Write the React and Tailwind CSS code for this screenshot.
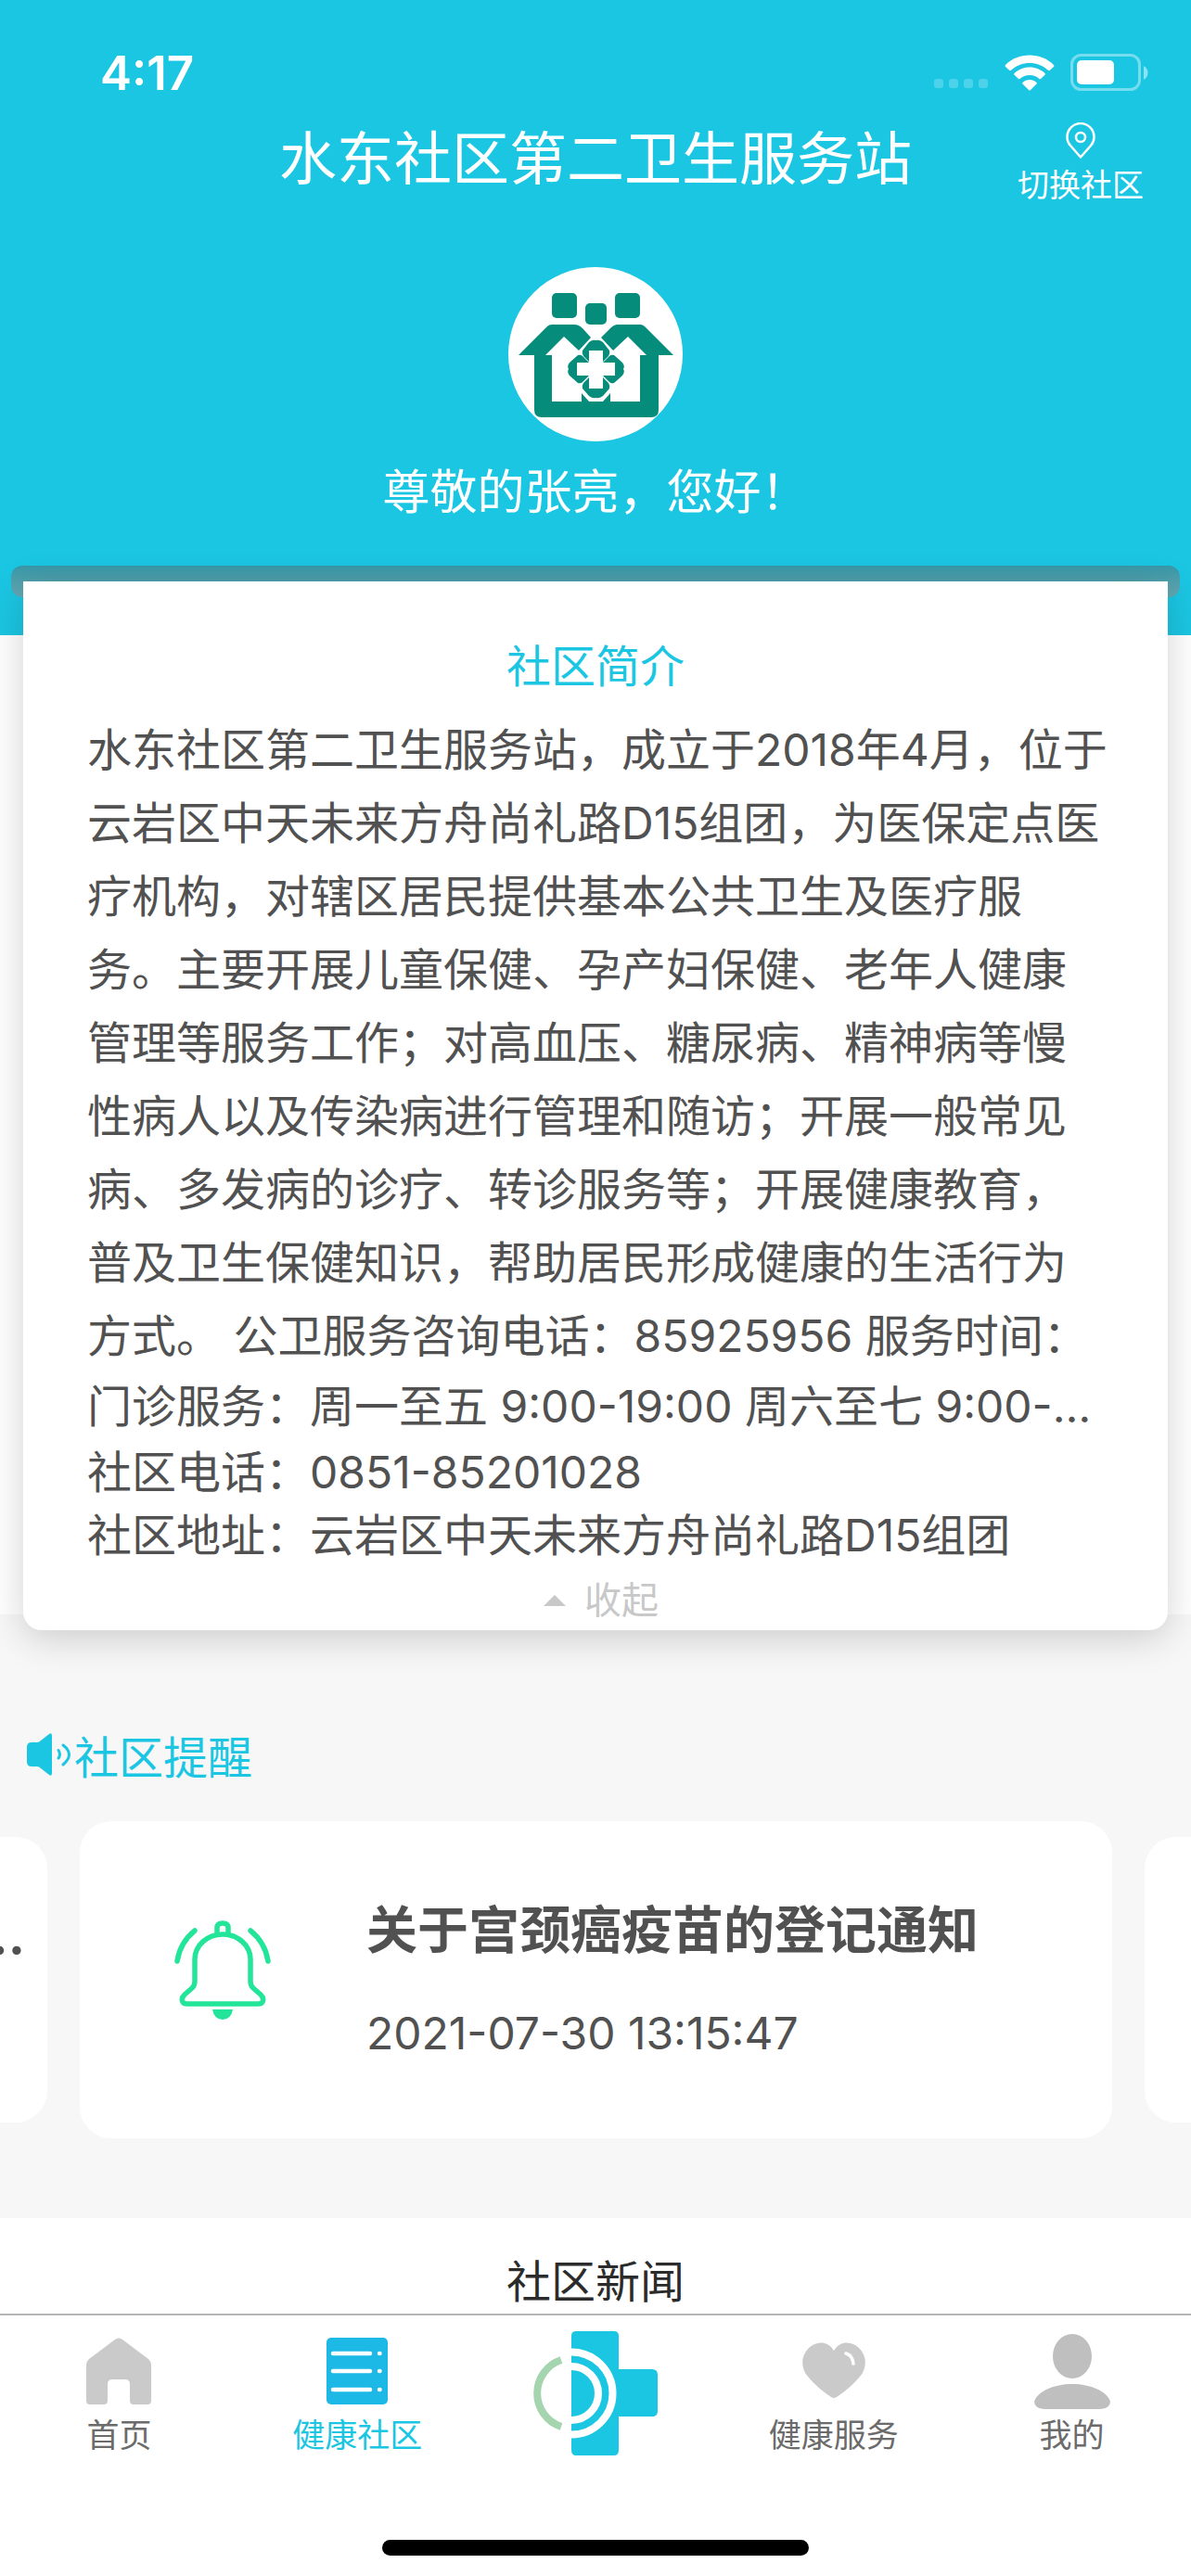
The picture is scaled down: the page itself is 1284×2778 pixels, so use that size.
import React from 'react';

const intro =
  '水东社区第二卫生服务站，成立于2018年4月，位于云岩区中天未来方舟尚礼路D15组团，为医保定点医疗机构，对辖区居民提供基本公共卫生及医疗服务。主要开展儿童保健、孕产妇保健、老年人健康管理等服务工作；对高血压、糖尿病、精神病等慢性病人以及传染病进行管理和随访；开展一般常见病、多发病的诊疗、转诊服务等；开展健康教育，普及卫生保健知识，帮助居民形成健康的生活行为方式。 公卫服务咨询电话：85925956 服务时间：';

const hours = '门诊服务：周一至五 9:00-19:00 周六至七 9:00-17:00';

function StatusBar() {
  return (
    <div className="flex h-[132px] items-center justify-between pt-6 pr-[46px] pl-[108px]">
      <span className="text-[51px] leading-none font-semibold">4:17</span>
      <div className="flex items-center">
        <svg className="mt-6 mr-4 h-3 w-[60px]" viewBox="0 0 60 12" fill="#fff" fillOpacity="0.22">
          <rect x="0" y="1" width="10" height="10" rx="3" />
          <rect x="16" y="1" width="10" height="10" rx="3" />
          <rect x="32" y="1" width="10" height="10" rx="3" />
          <rect x="48" y="1" width="10" height="10" rx="3" />
        </svg>
        <svg className="mr-[17px] h-[39px] w-[54px]" viewBox="0 0 54 39" fill="#fff">
          <path d="M27 0.5C37 0.5 46 4 53 11Q54 12 53 13L48.500 17Q48 17.500 47 16.700C41 11.500 34.500 9 27 9S13 11.500 7 16.700Q6 17.500 5.500 17L1 13Q0 12 1 11C8 4 17 0.500 27 0.500Z" />
          <path d="M27 13.500C33.500 13.500 39 16 43.500 20Q44.300 21 43.500 21.800L39 26Q38.300 26.700 37.500 26C34.500 23.500 31 22 27 22S19.500 23.500 16.500 26Q15.700 26.700 15 26L10.500 21.800Q9.700 21 10.500 20C15 16 20.500 13.500 27 13.500Z" />
          <path d="M27 27C30 27 32.500 28 34.500 30Q35.200 30.700 34.500 31.500L28 38Q27 39 26 38L19.500 31.500Q18.800 30.700 19.500 30C21.500 28 24 27 27 27Z" />
        </svg>
        <svg className="h-10 w-[84px]" viewBox="0 0 84 40" fill="#fff">
          <rect x="1.500" y="1.500" width="73" height="37" rx="10" fill="none" stroke="#fff" strokeOpacity="0.4" strokeWidth="3" />
          <rect x="7" y="7" width="40" height="26" rx="5" />
          <path d="M79 13C85 16 85 25 79 28Z" fillOpacity="0.5" />
        </svg>
      </div>
    </div>
  );
}

function CommunityLogo() {
  return (
    <svg className="size-[188px]" viewBox="0 0 188 188">
      <circle cx="94" cy="94" r="94" fill="#fff" />
      <g fill="#058c7b">
        <rect x="47" y="28" width="27" height="27" rx="5" />
        <rect x="83" y="39" width="23" height="23" rx="5" />
        <rect x="115" y="28" width="27" height="27" rx="5" />
        <path fillRule="evenodd" d="M11 95L42 64Q44 62 47 62H71Q76 62 80 66L89 76L76 90L60 75L40 95H47V145H79V136L87 145H102L110 136V145H142V95H149L129 75L113 90L100 76L110 66Q114 62 118 62H142Q145 62 147 64L178 95H162V154Q162 162 154 162H36Q28 162 28 154V95Z" />
        <path d="M87 81Q91 78 94 79Q98 78 102 81L109 90Q110 93 108 96L102 102V90H87V102L81 96Q79 93 80 90Z" />
        <path d="M87 139Q91 142 94 141Q98 142 102 139L109 131Q110 128 108 125L102 119V131H87V119L81 125Q79 128 80 131Z" />
        <path d="M66 103L75 95Q78 94 80 96L87 103H74V117H87L80 124Q78 126 75 125L66 117Q63 113 65 110Q63 107 66 103Z" />
        <path d="M123 103L114 95Q111 94 109 96L102 103H115V117H102L109 124Q111 126 114 125L123 117Q126 113 124 110Q126 107 123 103Z" />
      </g>
    </svg>
  );
}

function Header() {
  return (
    <header className="h-[685px] bg-[#1bc6e3] text-white">
      <StatusBar />
      <div className="grid grid-cols-[1fr_auto_1fr] items-start">
        <h1 className="col-start-2 pt-1 text-[62px] leading-[72px]">水东社区第二卫生服务站</h1>
        <button className="mr-[51px] flex flex-col items-center justify-self-end">
          <svg className="mb-2 h-10 w-8" viewBox="0 0 32 40" fill="none" stroke="#fff" strokeWidth="2.5">
            <path d="M16 37.500L5 25A14.500 14.500 0 1 1 27 25Z" strokeLinejoin="round" />
            <circle cx="16" cy="16" r="5" />
          </svg>
          <span className="text-[34px] leading-[40px]">切换社区</span>
        </button>
      </div>
      <div className="flex flex-col items-center pt-[68px]">
        <CommunityLogo />
        <p className="mt-6 text-[51px] leading-[62px]">尊敬的张亮，您好！</p>
      </div>
    </header>
  );
}

function IntroCard() {
  return (
    <section className="relative -mt-[75px] px-3">
      <div className="h-[34px] rounded-xl bg-linear-to-b from-[#3898a8] to-[#64a9b3]" />
      <div className="relative mx-[13px] -mt-[17px] rounded-b-[20px] bg-white px-[69px] pt-[58px] text-[48px] text-[#515151] shadow-[0_8px_40px_rgba(0,0,0,0.18)]">
        <h2 className="text-center leading-[68px] text-[#1bc6e3]">社区简介</h2>
        <p className="-mr-[7px] mt-4 leading-[79px]">{intro}</p>
        <p className="truncate leading-[74px]">{hours}</p>
        <p className="leading-[68px]">社区电话：0851-85201028</p>
        <p className="leading-[68px]">社区地址：云岩区中天未来方舟尚礼路D15组团</p>
        <button className="flex w-full items-center justify-center gap-5 pt-1 pl-3 text-[40px] leading-[64px] text-[#c8c8c8]">
          <svg className="h-3 w-6" viewBox="0 0 24 12" fill="#c8c8c8">
            <path d="M12 0L24 12H0Z" />
          </svg>
          收起
        </button>
      </div>
    </section>
  );
}

function BellIcon() {
  return (
    <svg className="mb-5 h-[108px] w-[104px] shrink-0" viewBox="0 0 104 108" fill="none" stroke="#22e59a" strokeWidth="5.5" strokeLinecap="round" strokeLinejoin="round">
      <path d="M22 42A30 27 0 0 1 82 42V66Q82 70 85 73L93 80Q97 84 95 88Q94 90 90 90H14Q10 90 9 88Q7 84 11 80L19 73Q22 70 22 66Z" />
      <path d="M46 14V8Q46 3 52 3T58 8V14" />
      <path d="M22 11Q6 24 3 44M82 11Q98 24 101 44" />
      <path d="M41 96H63Q61 107 52 107T41 96Z" fill="#22e59a" stroke="none" />
    </svg>
  );
}

function Reminders() {
  return (
    <section className="-mt-[17px] bg-[#f7f7f7] pb-[86px]">
      <h2 className="flex items-center pt-[121px] pl-7 text-[48px] leading-[68px] text-[#1bc6e3]">
        <svg className="-mt-2 mr-0.5 h-[46px] w-[50px]" viewBox="0 0 50 46" fill="#1bc6e3">
          <path d="M6 10H12Q14 10 16 8L25 1Q28 -1 28 3V43Q28 47 25 45L16 38Q14 36 12 36H6Q1 36 1 31V15Q1 10 6 10Z" />
          <path d="M35 18.500Q38 23 35 27M40 13Q53 23 40 34" fill="none" stroke="#1bc6e3" strokeWidth="3" strokeLinecap="round" />
        </svg>
        社区提醒
      </h2>
      <div className="mt-[34px] flex items-center gap-[35px] overflow-hidden">
        <div className="flex h-[308px] w-[51px] shrink-0 justify-end rounded-r-[34px] bg-white pt-[74px] pr-6 text-[55px] leading-[64px] font-bold text-[#515151]">
          …
        </div>
        <article className="flex h-[342px] min-w-0 flex-1 items-center rounded-[34px] bg-white pl-[102px] text-[#515151]">
          <BellIcon />
          <div className="ml-[103px]">
            <h3 className="text-[55px] leading-[76px] font-bold">关于宫颈癌疫苗的登记通知</h3>
            <p className="mt-10 text-[48px] leading-[68px]">2021-07-30 13:15:47</p>
          </div>
        </article>
        <div className="h-[308px] w-[50px] shrink-0 rounded-l-[34px] bg-white" />
      </div>
    </section>
  );
}

const tabs = [
  {
    label: '首页',
    icon: (
      <svg className="h-[76px] w-[84px]" viewBox="0 0 84 76" fill="#cacaca">
        <path d="M38 4Q42 1 46 4L74 25Q77 28 77 31V70Q77 74 73 74H58Q54 74 54 70V52Q54 47 49 47H35Q30 47 30 52V70Q30 74 26 74H11Q7 74 7 70V31Q7 28 10 25Z" />
      </svg>
    ),
  },
  {
    label: '健康社区',
    active: true,
    icon: (
      <svg className="h-[76px] w-[84px]" viewBox="0 0 84 76">
        <rect x="9" y="2" width="66" height="72" rx="5" fill="#1cb9e6" />
        <path d="M16 19H56M16 38H56M16 58H56M66 19H66.500M66 38H66.500M66 58H66.500" stroke="#fff" strokeWidth="4.500" strokeLinecap="round" />
      </svg>
    ),
  },
  { label: '', icon: null },
  {
    label: '健康服务',
    icon: (
      <svg className="h-[76px] w-[84px]" viewBox="0 0 84 76">
        <path d="M42 16C36 6 26 6 19 10C5 19 6 35 14 44Q24 56 39 66Q42 68 45 66Q60 56 70 44C78 35 79 19 65 10C58 6 48 6 42 16Z" fill="#cacaca" />
        <path d="M55 19Q62 21 63 30" stroke="#fff" strokeWidth="3.500" strokeLinecap="round" fill="none" />
      </svg>
    ),
  },
  {
    label: '我的',
    icon: (
      <svg className="-mb-1 h-[84px] w-[84px]" viewBox="0 0 84 84" fill="#bfbfbf">
        <ellipse cx="42" cy="26" rx="21" ry="24" />
        <path d="M1 75C4 64 22 56 42 56S80 64 83 75Q83 82 72 83H12Q1 82 1 75Z" />
      </svg>
    ),
  },
];

function CrossLogo() {
  return (
    <svg className="h-[136px] w-[136px]" viewBox="0 0 136 136">
      <path d="M47 1H88Q93 1 93 6V42H129Q135 42 135 48V87Q135 93 129 93H93V129Q93 135 88 135H47Q42 135 42 129V6Q42 1 47 1Z" fill="#1bc6e3" />
      <path d="M42 23.500A44.500 44.500 0 0 1 42 112.500M42 39A29 29 0 0 1 42 97" stroke="#fff" strokeWidth="8" fill="none" />
      <path d="M31 32A38 38 0 0 0 31 104" stroke="#a5d5af" strokeWidth="8" fill="none" />
    </svg>
  );
}

function TabBar() {
  return (
    <nav className="grid h-[283px] grid-cols-5 items-start border-t-2 border-[#b5b5b5] bg-white">
      {tabs.map((tab, i) =>
        tab.icon ? (
          <button
            key={i}
            className={`flex h-[152px] flex-col items-center justify-end text-[35px] leading-[46px] ${
              tab.active ? 'text-[#1bc6e3]' : 'text-[#6b6b6b]'
            }`}
          >
            {tab.icon}
            <span className="mt-2">{tab.label}</span>
          </button>
        ) : (
          <button key={i} aria-label="服务" className="flex justify-center pt-4">
            <CrossLogo />
          </button>
        )
      )}
    </nav>
  );
}

export default function App() {
  return (
    <div className="relative flex min-h-screen flex-col bg-white font-['Inter','Noto_Sans_CJK_SC',sans-serif]">
      <Header />
      <IntroCard />
      <Reminders />
      <section className="flex-1 bg-white pt-[35px]">
        <h2 className="text-center text-[48px] leading-[68px] text-[#2b2b2b]">社区新闻</h2>
      </section>
      <TabBar />
      <div className="absolute bottom-[22px] left-1/2 h-[17px] w-[460px] -translate-x-1/2 rounded-full bg-black" />
    </div>
  );
}
